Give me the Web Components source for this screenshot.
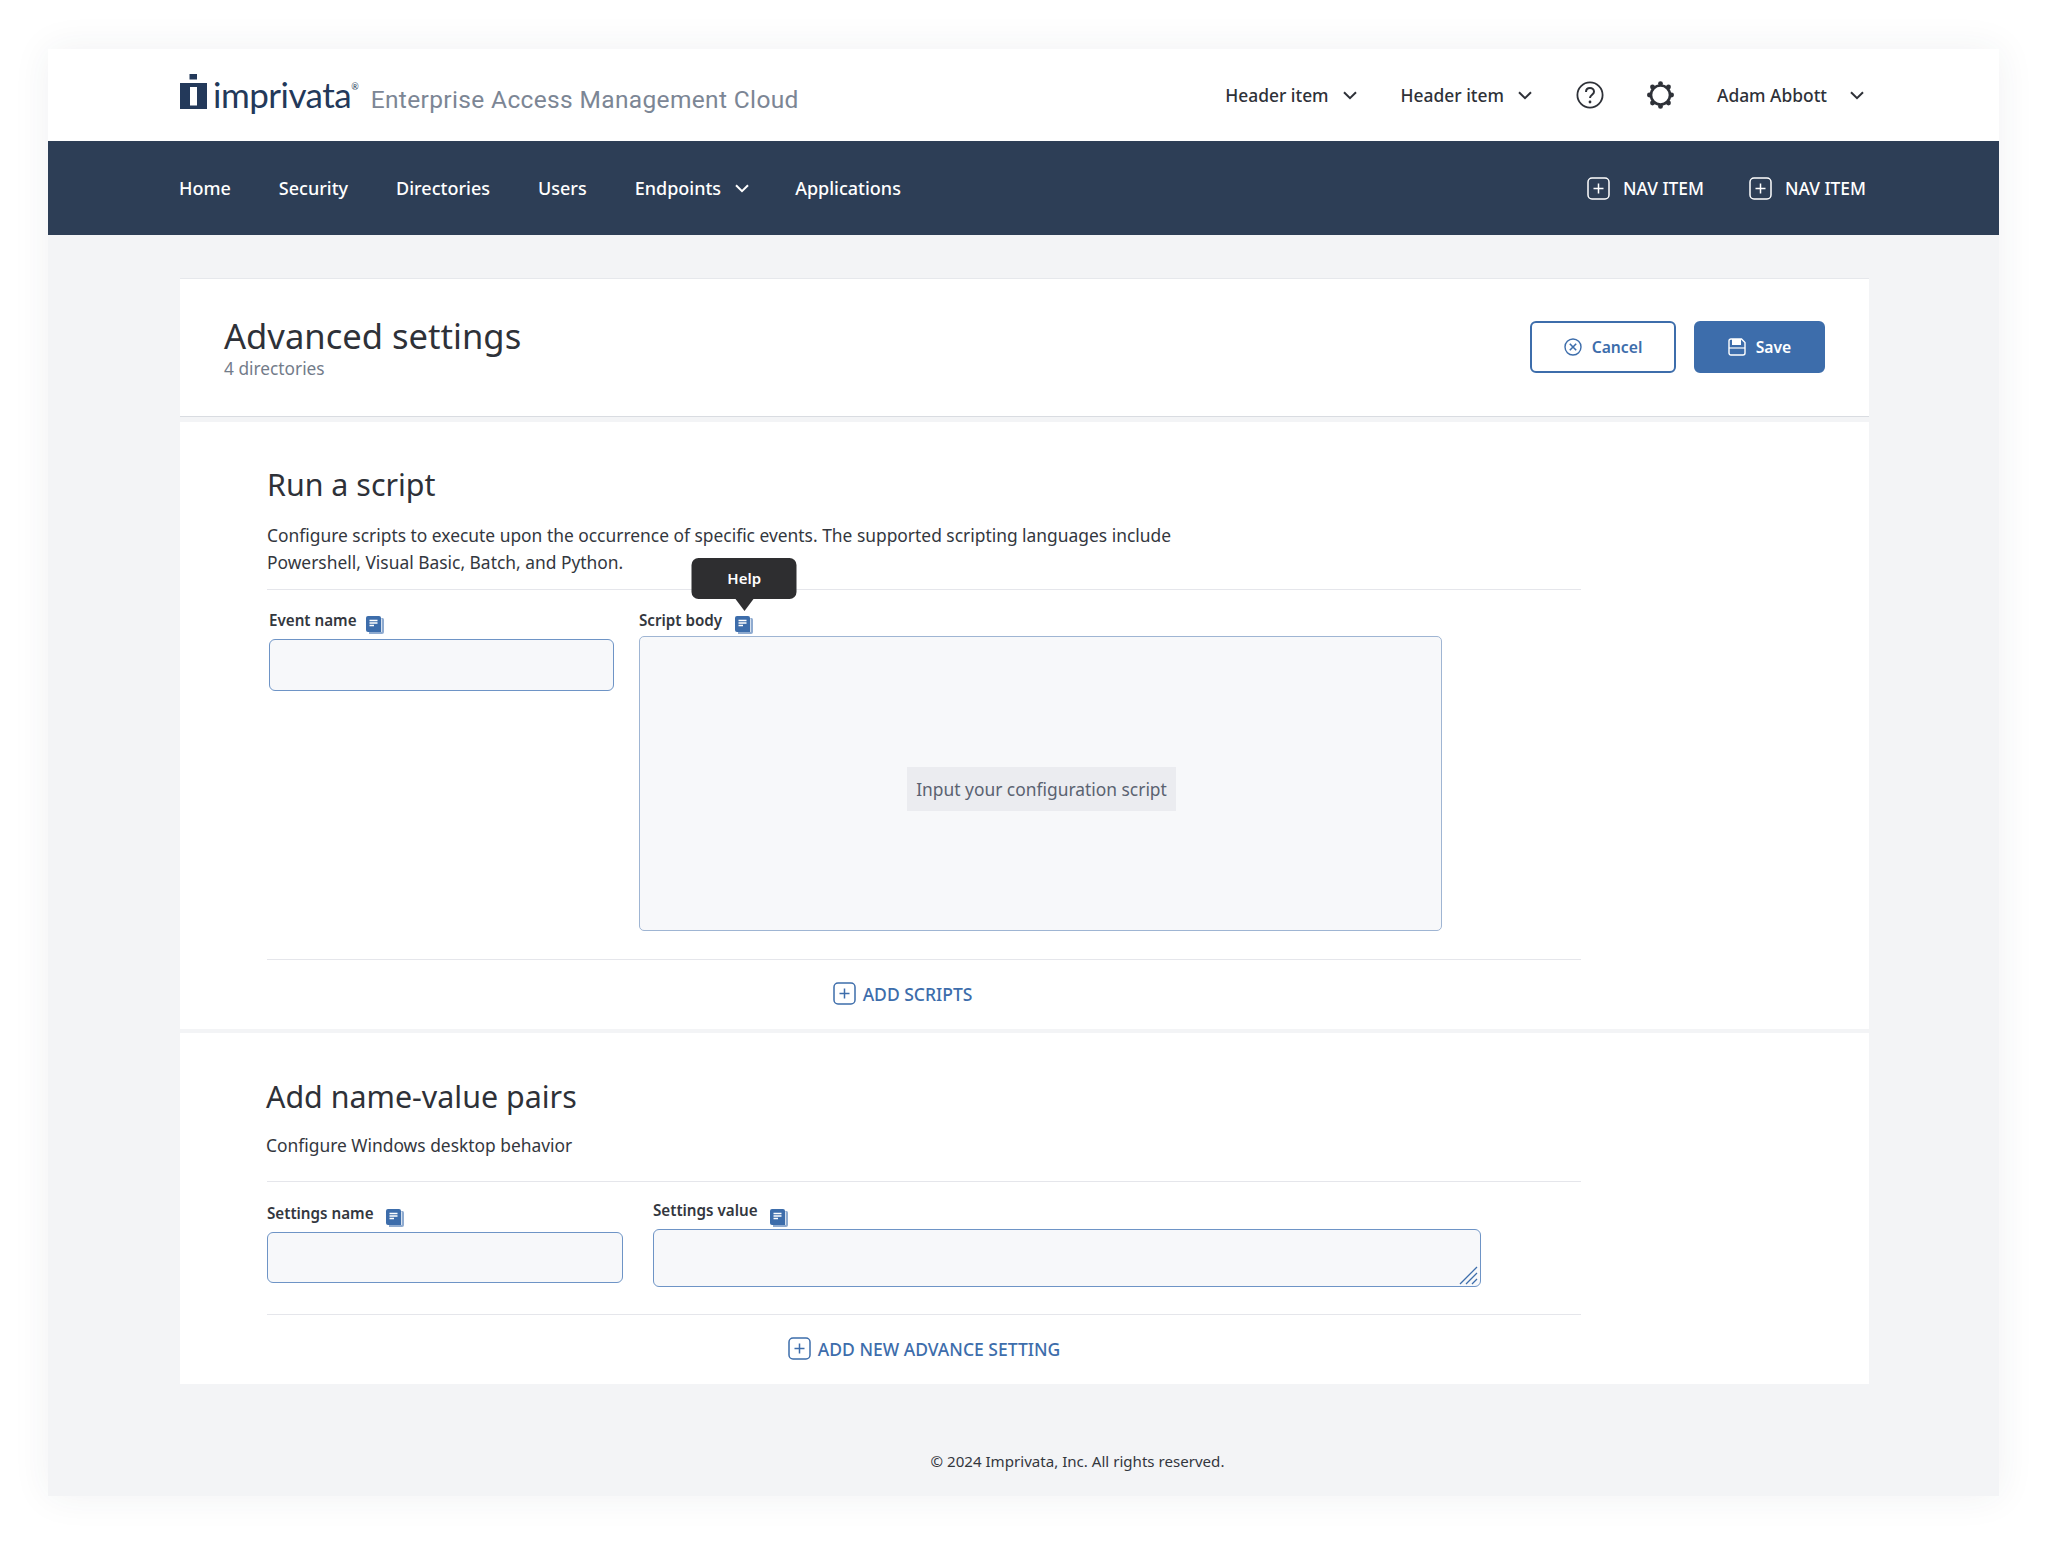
<!DOCTYPE html>
<html lang="en">
<head>
<meta charset="utf-8">
<title>Advanced settings</title>
<style>
  html, body { margin: 0; background: #fff; }
  body { font-family: 'Noto Sans', sans-serif; color: #2e3138; width: 2048px; height: 1545px; overflow: hidden; }
</style>
</head>
<body>
<app-frame>
  <app-header slot="header" user="Adam Abbott"></app-header>
  <app-nav slot="nav"></app-nav>

  <page-head heading="Advanced settings" sub="4 directories"></page-head>

  <settings-section class="scripts" heading="Run a script" action="ADD SCRIPTS">
    <span slot="desc">Configure scripts to execute upon the occurrence of specific events. The supported scripting languages include<br>Powershell, Visual Basic, Batch, and Python.</span>
    <form-field label="Event name" icon-gap="9" style="--w:345px;--top:18px;--gap:7px;--icon-top:5px">
      <text-input style="--h:52px"></text-input>
    </form-field>
    <form-field label="Script body" icon-gap="13" tip="Help" style="--w:803px;--top:18px;--gap:4px;--icon-top:5px;margin-left:25px">
      <script-box placeholder="Input your configuration script"></script-box>
    </form-field>
  </settings-section>

  <settings-section class="pairs" heading="Add name-value pairs" action="ADD NEW ADVANCE SETTING">
    <span slot="desc">Configure Windows desktop behavior</span>
    <form-field label="Settings name" icon-gap="12" style="--w:356px;--top:19px;--gap:7px;--icon-top:5px">
      <text-input style="--h:51px"></text-input>
    </form-field>
    <form-field label="Settings value" icon-gap="12" style="--w:828px;--top:16px;--gap:7px;--icon-top:8px;margin-left:30px">
      <text-input multiline style="--h:58px"></text-input>
    </form-field>
  </settings-section>

  <app-footer>© 2024 Imprivata, Inc. All rights reserved.</app-footer>
</app-frame>

<script>
const chevron = `<svg width="14" height="9" viewBox="0 0 14 9" fill="none"><path d="M1 1.2l6 6 6-6" stroke="currentColor" stroke-width="2"/></svg>`;
const plusBox = `<svg width="23" height="23" viewBox="0 0 23 23" fill="none"><rect x="1" y="1" width="21" height="21" rx="4" stroke="currentColor" stroke-width="1.5"/><path d="M11.5 6.5v10M6.5 11.5h10" stroke="currentColor" stroke-width="1.5"/></svg>`;

class AppFrame extends HTMLElement {
  constructor() {
    super();
    this.attachShadow({ mode: 'open' });
    this.shadowRoot.innerHTML = `
      <style>
        :host {
          display: flex;
          flex-direction: column;
          width: 1951px;
          height: 1447px;
          margin: 49px 0 0 48px;
          background: #f3f4f6;
          box-shadow: 0 0 36px rgba(40, 50, 70, .07);
        }
        .content { flex: 1; display: flex; flex-direction: column; padding: 43px 130px 0 132px; }
      </style>
      <slot name="header"></slot>
      <slot name="nav"></slot>
      <div class="content"><slot></slot></div>
    `;
  }
}

class AppHeader extends HTMLElement {
  constructor() {
    super();
    this.attachShadow({ mode: 'open' });
    this.shadowRoot.innerHTML = `
      <style>
        :host { display: flex; align-items: center; height: 92px; background: #fff; padding: 0 135px 0 132px; }
        .brand { display: flex; align-items: baseline; margin-top: -2px; }
        .mark { align-self: flex-end; margin-right: 6px; margin-bottom: 5px; display: block; }
        .word { font: 400 35px 'Lato', sans-serif; letter-spacing: -.5px; color: #23395a; }
        .reg { font: 400 9px 'Lato', sans-serif; color: #23395a; position: relative; top: -18px; margin-right: 12px; }
        .tag { font: 400 24.5px 'Roboto', sans-serif; letter-spacing: .35px; color: #7c8695; }
        .right { margin-left: auto; display: flex; align-items: center; font-size: 17.4px; font-weight: 500; color: #2e3138; }
        .item { display: flex; align-items: center; gap: 14px; margin-right: 44px; white-space: nowrap; }
        .ico { display: block; margin-right: 43px; }
        .user { display: flex; align-items: center; gap: 23px; white-space: nowrap; }
      </style>
      <div class="brand">
        <svg class="mark" width="27" height="36" viewBox="0 0 27 36"><path fill="#23395a" d="M9.500 0h7.500v5.500H9.500zM0 9h27v26H0zM10 13v18.500h7V13z" fill-rule="evenodd"/></svg>
        <span class="word">imprivata</span><span class="reg">®</span>
        <span class="tag">Enterprise Access Management Cloud</span>
      </div>
      <div class="right">
        <span class="item">Header item ${chevron}</span>
        <span class="item">Header item ${chevron}</span>
        <svg class="ico" width="28" height="28" viewBox="0 0 28 28" fill="none"><circle cx="14" cy="14" r="12.600" stroke="#2e3138" stroke-width="1.800"/><path d="M10 11c0-2.500 1.800-4 4-4s4 1.500 4 3.700c0 3-4 3-4 6.300" stroke="#2e3138" stroke-width="2"/><circle cx="14" cy="21" r="1.400" fill="#2e3138"/></svg>
        <svg class="ico" width="27" height="28" viewBox="0 0 27 28" fill="none"><circle cx="13.500" cy="14" r="9.500" stroke="#2e3138" stroke-width="2.600"/><g fill="#2e3138"><circle cx="13.500" cy="2.600" r="2.400"/><circle cx="13.500" cy="25.400" r="2.400"/><circle cx="2.400" cy="14" r="2.400"/><circle cx="24.600" cy="14" r="2.400"/><circle cx="5.500" cy="6" r="2.400"/><circle cx="21.500" cy="6" r="2.400"/><circle cx="5.500" cy="22" r="2.400"/><circle cx="21.500" cy="22" r="2.400"/></g></svg>
        <span class="user"><span id="user"></span> ${chevron}</span>
      </div>
    `;
    this.shadowRoot.querySelector('#user').textContent = this.getAttribute('user');
  }
}

class AppNav extends HTMLElement {
  constructor() {
    super();
    this.attachShadow({ mode: 'open' });
    this.shadowRoot.innerHTML = `
      <style>
        :host {
          display: flex; align-items: center; height: 94px; background: #2d3e56; color: #fff;
          padding: 0 133px 0 131px; font-size: 18px; font-weight: 500;
        }
        a { display: flex; align-items: center; margin-right: 48px; white-space: nowrap; }
        a.drop { margin-right: 46px; }
        a svg { margin-left: 14px; }
        .end { margin-left: auto; display: flex; gap: 45px; font-size: 17.4px; }
        .add { display: flex; align-items: center; gap: 13px; }
      </style>
      <a>Home</a><a>Security</a><a>Directories</a><a>Users</a>
      <a class="drop">Endpoints ${chevron}</a>
      <a>Applications</a>
      <div class="end">
        <span class="add">${plusBox} NAV ITEM</span>
        <span class="add">${plusBox} NAV ITEM</span>
      </div>
    `;
  }
}

class PageHead extends HTMLElement {
  constructor() {
    super();
    this.attachShadow({ mode: 'open' });
    this.shadowRoot.innerHTML = `
      <style>
        :host {
          display: flex; justify-content: space-between; box-sizing: border-box; height: 139px;
          background: #fff; padding: 33px 44px 0 44px;
          border-top: 1px solid #e6e8ec; border-bottom: 1px solid #d9dce1;
        }
        h1 { margin: 0; font-size: 34.6px; line-height: 48px; font-weight: 400; color: #2e3138; }
        p { margin: 0; font-size: 17.3px; line-height: 24px; margin-top: -3px; color: #737c8a; }
        .btns { display: flex; gap: 18px; padding-top: 9px; }
        button {
          box-sizing: border-box; height: 52px; display: flex; align-items: center; justify-content: center; gap: 10px;
          border-radius: 6px; border: 2px solid #3d6dab; font: 600 15.7px 'Noto Sans', sans-serif;
        }
        .cancel { width: 146px; background: #fff; color: #3d6dab; }
        .save { width: 131px; background: #3d6dab; color: #fff; }
      </style>
      <div><h1></h1><p></p></div>
      <div class="btns">
        <button class="cancel">
          <svg width="18" height="18" viewBox="0 0 18 18" fill="none" stroke="currentColor" stroke-width="1.400"><circle cx="9" cy="9" r="8"/><path d="M5.800 5.800l6.400 6.400M12.200 5.800l-6.400 6.400" stroke-width="1.600"/></svg>
          Cancel
        </button>
        <button class="save">
          <svg width="18" height="18" viewBox="0 0 18 18" fill="none"><path d="M1 3a2 2 0 012-2h10.500L17 4.500V15a2 2 0 01-2 2H3a2 2 0 01-2-2z" stroke="currentColor" stroke-width="1.400"/><path d="M4 1h9v6H4z" fill="currentColor"/><path d="M1 10h16" stroke="currentColor" stroke-width="1.200"/></svg>
          Save
        </button>
      </div>
    `;
    this.shadowRoot.querySelector('h1').textContent = this.getAttribute('heading');
    this.shadowRoot.querySelector('p').textContent = this.getAttribute('sub');
  }
}

class SettingsSection extends HTMLElement {
  constructor() {
    super();
    this.attachShadow({ mode: 'open' });
    this.shadowRoot.innerHTML = `
      <style>
        :host { display: block; background: #fff; padding: 41px 288px 0 87px; margin-top: 5px; }
        :host(.pairs) { margin-top: 4px; padding-top: 42px; }
        :host(.pairs) h2 { margin-left: -1px; }
        h2 { margin: 0; font-size: 30.4px; line-height: 44px; font-weight: 400; color: #2e3138; }
        .desc { margin: 15px 0 13px; font-size: 17.4px; line-height: 27px; color: #33373e; }
        :host(.pairs) .desc { margin: 13px 0 22px -1px; }
        .fields { display: flex; align-items: flex-start; padding: 0 0 28px 2px; border-top: 1px solid #e5e6eb; border-bottom: 1px solid #e5e6eb; }
        :host(.pairs) .fields { padding: 0 0 27px 0; }
        .action {
          box-sizing: border-box; height: 69px; display: flex; align-items: center; justify-content: center; gap: 7px;
          padding: 0 43px 2px 0; color: #3d6dab; font-size: 17.5px; font-weight: 500;
        }
        :host(.pairs) .action { padding-right: 0; }
      </style>
      <h2></h2>
      <div class="desc"><slot name="desc"></slot></div>
      <div class="fields"><slot></slot></div>
      <div class="action">${plusBox}<span></span></div>
    `;
    this.shadowRoot.querySelector('h2').textContent = this.getAttribute('heading');
    this.shadowRoot.querySelector('.action span').textContent = this.getAttribute('action');
  }
}

class FormField extends HTMLElement {
  constructor() {
    super();
    this.attachShadow({ mode: 'open' });
    const tip = this.getAttribute('tip');
    this.shadowRoot.innerHTML = `
      <style>
        :host { display: block; width: var(--w); padding-top: var(--top); }
        .label { display: flex; align-items: center; height: 24px; margin-bottom: var(--gap); font-size: 15.2px; font-weight: 600; color: #33373e; }
        help-icon { margin-left: ${this.getAttribute('icon-gap')}px; }
      </style>
      <div class="label"><span id="text"></span><help-icon ${tip ? `tip="${tip}"` : ''}></help-icon></div>
      <slot></slot>
    `;
    this.shadowRoot.querySelector('#text').textContent = this.getAttribute('label');
  }
}

class HelpIcon extends HTMLElement {
  constructor() {
    super();
    this.attachShadow({ mode: 'open' });
    const tip = this.getAttribute('tip');
    this.shadowRoot.innerHTML = `
      <style>
        :host { display: block; position: relative; width: 18px; height: 18px; top: var(--icon-top); }
        svg { display: block; }
        .tip {
          position: absolute; left: 50%; bottom: 35px; transform: translateX(-50%);
          width: 105px; height: 41px; padding-bottom: 2px; box-sizing: border-box; display: flex; align-items: center; justify-content: center;
          background: #2e2e30; color: #fff; border-radius: 7px; font-size: 15px; font-weight: 600;
        }
        .tip::after {
          content: ''; position: absolute; left: 50%; top: 100%; margin-left: -9px;
          border: 9px solid transparent; border-top: 12px solid #2e2e30; border-bottom: 0;
        }
      </style>
      <svg width="18" height="18" viewBox="0 0 18 18">
        <path fill="#8fabd0" d="M4 2h12.500a1.500 1.500 0 011.500 1.500V16a2 2 0 01-2 2H3V16z"/>
        <path fill="#fff" d="M14 2.500h1.600V16H3v-1z"/>
        <path fill="#3d6dab" d="M2 0h11a2 2 0 012 2v14H2a2 2 0 01-2-2V2a2 2 0 012-2z"/>
        <path stroke="#fff" stroke-width="1.300" d="M3.500 4.500h8M3.500 7h8M3.500 9.500h4.500"/>
      </svg>
      ${tip ? `<div class="tip">${tip}</div>` : ''}
    `;
  }
}

class TextInput extends HTMLElement {
  constructor() {
    super();
    this.attachShadow({ mode: 'open' });
    this.shadowRoot.innerHTML = `
      <style>
        :host { display: block; position: relative; height: var(--h); }
        input, textarea {
          display: block; box-sizing: border-box; width: 100%; height: 100%; margin: 0; padding: 8px;
          background: #f7f8fa; border: 1.5px solid #6e94c6; border-radius: 6px; resize: none; outline: 0;
        }
        svg { position: absolute; right: 2px; bottom: 2px; }
      </style>
      ${this.hasAttribute('multiline')
        ? `<textarea></textarea><svg width="20" height="20" viewBox="0 0 20 20" stroke="#3d6dab" stroke-width="1.300"><path d="M1 19L18 2M7 19L18 8M13 19l5-5"/></svg>`
        : `<input type="text">`}
    `;
  }
}

class ScriptBox extends HTMLElement {
  constructor() {
    super();
    this.attachShadow({ mode: 'open' });
    this.shadowRoot.innerHTML = `
      <style>
        :host {
          display: flex; align-items: center; justify-content: center; box-sizing: border-box; height: 295px;
          padding: 10px 0 0 2px; background: #f7f8fa; border: 1.5px solid #9fb5d3; border-radius: 5px;
        }
        span { background: #ebecf0; color: #5a6270; font-size: 17.4px; line-height: 44px; padding: 0 9px; }
      </style>
      <span></span>
    `;
    this.shadowRoot.querySelector('span').textContent = this.getAttribute('placeholder');
  }
}

class AppFooter extends HTMLElement {
  constructor() {
    super();
    this.attachShadow({ mode: 'open' });
    this.shadowRoot.innerHTML = `
      <style>
        :host { display: block; margin-top: 65px; padding-left: 106px; text-align: center; font-size: 15.1px; line-height: 24px; color: #33373e; }
      </style>
      <slot></slot>
    `;
  }
}

customElements.define('app-frame', AppFrame);
customElements.define('app-header', AppHeader);
customElements.define('app-nav', AppNav);
customElements.define('page-head', PageHead);
customElements.define('help-icon', HelpIcon);
customElements.define('form-field', FormField);
customElements.define('settings-section', SettingsSection);
customElements.define('text-input', TextInput);
customElements.define('script-box', ScriptBox);
customElements.define('app-footer', AppFooter);
</script>
</body>
</html>
